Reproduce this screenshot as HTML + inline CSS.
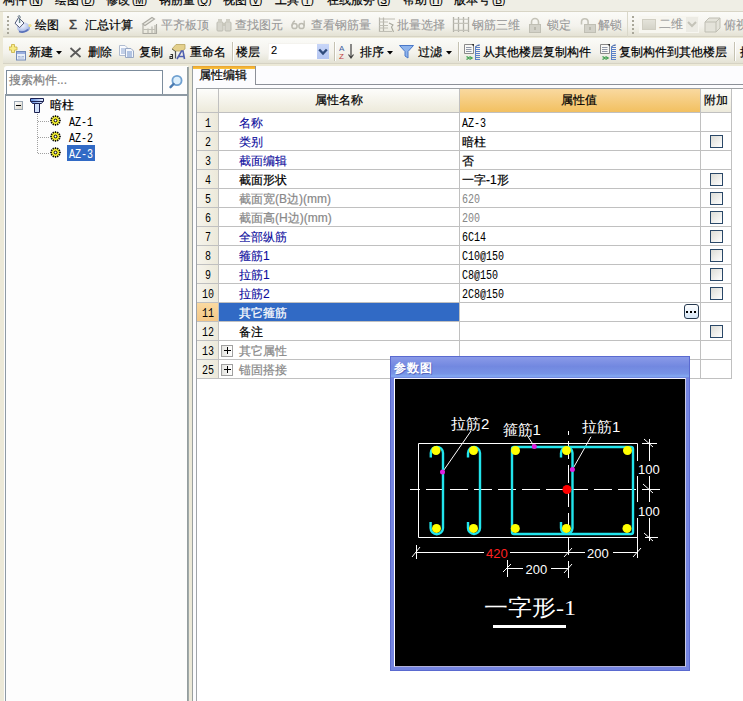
<!DOCTYPE html>
<html><head><meta charset="utf-8">
<style>
*{box-sizing:border-box}
html,body{margin:0;padding:0}
body{width:743px;height:701px;position:relative;overflow:hidden;background:#ECE9D8;font-family:"Liberation Sans",sans-serif;font-size:12px;color:#000}
.a{position:absolute}
.t{position:absolute;white-space:nowrap;line-height:12px;font-size:12px;-webkit-text-stroke-width:0.2px}
.mono{font-family:"Liberation Mono",monospace;font-size:12px;transform:scaleX(.834);transform-origin:0 0;-webkit-text-stroke-width:0.05px;margin-top:1px}
.g{color:#989898;-webkit-text-stroke-width:0.1px}
</style></head><body>

<!-- menu bar -->
<div class="a" style="left:0;top:0;width:743px;height:11px;background:#EFEEE5"></div>
<div class="a" style="left:0;top:11px;width:743px;height:1px;background:#D8D5C6"></div>
<div id="menu">
<span class="t" style="left:3px;top:-6px">构件<span style="margin-left:2px;font-size:10px;-webkit-text-stroke-width:0.1px">(<u>N</u>)</span></span>
<span class="t" style="left:55px;top:-6px">绘图<span style="margin-left:2px;font-size:10px;-webkit-text-stroke-width:0.1px">(<u>D</u>)</span></span>
<span class="t" style="left:106px;top:-6px">修改<span style="margin-left:2px;font-size:10px;-webkit-text-stroke-width:0.1px">(<u>M</u>)</span></span>
<span class="t" style="left:159px;top:-6px">钢筋量<span style="margin-left:2px;font-size:10px;-webkit-text-stroke-width:0.1px">(<u>Q</u>)</span></span>
<span class="t" style="left:223px;top:-6px">视图<span style="margin-left:2px;font-size:10px;-webkit-text-stroke-width:0.1px">(<u>V</u>)</span></span>
<span class="t" style="left:275px;top:-6px">工具<span style="margin-left:2px;font-size:10px;-webkit-text-stroke-width:0.1px">(<u>T</u>)</span></span>
<span class="t" style="left:327px;top:-6px">在线服务<span style="margin-left:2px;font-size:10px;-webkit-text-stroke-width:0.1px">(<u>S</u>)</span></span>
<span class="t" style="left:403px;top:-6px">帮助<span style="margin-left:2px;font-size:10px;-webkit-text-stroke-width:0.1px">(<u>H</u>)</span></span>
<span class="t" style="left:454px;top:-6px">版本号<span style="margin-left:2px;font-size:10px;-webkit-text-stroke-width:0.1px">(<u>B</u>)</span></span>
</div>

<!-- toolbar 1 -->
<div class="a" style="left:0;top:12px;width:743px;height:26px;background:#ECE9D8"></div>
<div class="a" style="left:3px;top:12px;width:740px;height:25px;background:linear-gradient(#FBFBF8,#F3F2EC 60%,#E4E2D4);border-bottom:1px solid #D6D3C4"></div>

<!-- toolbar 2 -->
<div class="a" style="left:3px;top:38px;width:740px;height:26px;background:linear-gradient(#FBFBF8,#F3F2EC 60%,#E4E2D4);border-bottom:1px solid #D6D3C4"></div>


<!-- toolbar1 items -->
<div class="a" style="left:7px;top:16px;width:2px;height:18px;background:repeating-linear-gradient(#A9A79A 0 2px,transparent 2px 4px)"></div>
<svg class="a" style="left:12px;top:14px" width="22" height="22" viewBox="0 0 22 22">
 <defs><radialGradient id="sw" cx="0.4" cy="0.3" r="0.8"><stop offset="0" stop-color="#F4F6FE"/><stop offset="0.6" stop-color="#B8C6EC"/><stop offset="1" stop-color="#5A74C0"/></radialGradient></defs>
 <ellipse cx="11.5" cy="13.5" rx="6.5" ry="5" fill="url(#sw)"/>
 <path d="M7 17.5 Q12 19.5 16 15.5" stroke="#5870B8" stroke-width="1.6" fill="none"/>
 <path d="M3 9.3 L6.6 3.6 L12 9 L7.6 13.6 Z" fill="#F6F8FE" stroke="#505878" stroke-width="1"/>
 <path d="M6.6 3.6 Q5.5 2 6.8 1.6 Q8.5 1.5 8.2 4" stroke="#607080" stroke-width="1" fill="none"/>
 <path d="M7.6 4.5 V9" stroke="#6A8888" stroke-width="1.4"/>
 <circle cx="18" cy="11.5" r="1.6" fill="#F0E080"/>
</svg>
<span class="t" style="left:35px;top:19px">绘图</span>
<span class="t" style="left:69px;top:19px;font-size:13px;color:#404040;-webkit-text-stroke-width:0.4px">&Sigma;</span>
<span class="t" style="left:85px;top:19px">汇总计算</span>
<svg class="a" style="left:141px;top:16px" width="17" height="18" viewBox="0 0 17 18">
 <path d="M1.5 8 L11 1.5 L13.5 3 L4 9.5 Z" fill="#ECEBE4" stroke="#ABAAA2" stroke-width="1.1"/>
 <path d="M2 9v8.5H15.5V8" stroke="#ABAAA2" stroke-width="1.1" fill="none"/>
 <path d="M7 12.5v5M11 10.5v7M14 9v8.5" stroke="#B4B3AA" stroke-width="1.1"/>
 <path d="M2 13.5h12" stroke="#C0BFB6" stroke-width="1"/>
</svg>
<span class="t g" style="left:161px;top:19px">平齐板顶</span>
<svg class="a" style="left:216px;top:18px" width="16" height="14" viewBox="0 0 16 14">
 <rect x="1" y="4" width="6" height="9" rx="1" fill="#D6D5CC" stroke="#BDBCB2"/>
 <rect x="9" y="4" width="6" height="9" rx="1" fill="#D6D5CC" stroke="#BDBCB2"/>
 <rect x="2" y="1" width="4" height="4" fill="#CFCEC4"/><rect x="10" y="1" width="4" height="4" fill="#CFCEC4"/>
 <rect x="6" y="5" width="4" height="3" fill="#C8C7BC"/>
</svg>
<span class="t g" style="left:235px;top:19px">查找图元</span>
<svg class="a" style="left:291px;top:20px" width="15" height="10" viewBox="0 0 15 10">
 <circle cx="3.5" cy="6" r="2.6" fill="none" stroke="#BDBCB2" stroke-width="1.5"/>
 <circle cx="10.5" cy="6" r="2.6" fill="none" stroke="#BDBCB2" stroke-width="1.5"/>
 <path d="M1 6 Q1.5 1.5 4 1 M13.2 6 V0.5" stroke="#BDBCB2" stroke-width="1.3" fill="none"/>
</svg>
<span class="t g" style="left:311px;top:19px">查看钢筋量</span>
<svg class="a" style="left:378px;top:16px" width="18" height="17" viewBox="0 0 18 17">
 <path d="M1.5 1.5v14.5M5.5 1.5v14.5" stroke="#B4B3AA" stroke-width="1.2"/>
 <path d="M1 3h16M1 6h9M1 9.5h9M1 12h9M1 15.5h13" stroke="#BFBEB4" stroke-width="1.1"/>
 <path d="M11 7 L15 9 L13.5 11 L15.5 16" stroke="#A8A79C" stroke-width="1.1" fill="none"/>
</svg>
<span class="t g" style="left:397px;top:19px">批量选择</span>
<svg class="a" style="left:452px;top:16px" width="18" height="17" viewBox="0 0 18 17">
 <path d="M1.5 1v15M6.5 1v15M11.5 1v15M16.5 1v15" stroke="#B2B1A8" stroke-width="1.3"/>
 <path d="M1.5 3.3h15M1.5 7.4h15M1.5 14.4h15" stroke="#C4C3BA" stroke-width="1.1"/>
</svg>
<span class="t g" style="left:472px;top:19px">钢筋三维</span>
<svg class="a" style="left:528px;top:17px" width="14" height="16" viewBox="0 0 14 16">
 <path d="M3.5 7.5V5a3.5 3.5 0 0 1 7 0v2.5" stroke="#C4C3B8" stroke-width="1.6" fill="none"/>
 <rect x="1.5" y="7.5" width="11" height="8" fill="#D2D1C8" stroke="#C0BFB4"/>
 <path d="M7 10v3" stroke="#B0AFA4" stroke-width="1.5"/>
</svg>
<span class="t g" style="left:547px;top:19px">锁定</span>
<svg class="a" style="left:580px;top:17px" width="16" height="16" viewBox="0 0 16 16">
 <path d="M1.5 7.5V5a3.3 3.3 0 0 1 6.6 0v2.5" stroke="#C4C3B8" stroke-width="1.6" fill="none"/>
 <rect x="4.5" y="7.5" width="11" height="8" fill="#D2D1C8" stroke="#C0BFB4"/>
 <path d="M10 10v3" stroke="#B0AFA4" stroke-width="1.5"/>
</svg>
<span class="t g" style="left:598px;top:19px">解锁</span>
<div class="a" style="left:627px;top:12px;width:1px;height:25px;background:#DAD8CA"></div>
<div class="a" style="left:632px;top:16px;width:2px;height:18px;background:repeating-linear-gradient(#A9A79A 0 2px,transparent 2px 4px)"></div>
<div class="a" style="left:639px;top:16px;width:60px;height:17px;background:#F7F6F0"></div>
<div class="a" style="left:642px;top:19px;width:14px;height:11px;background:linear-gradient(#E4E3DA,#D4D3C8);border:1px solid #D0CEC2"></div>
<span class="t g" style="left:659px;top:18px">二维</span>
<div class="a" style="left:686px;top:17px;width:12px;height:15px;background:#ECEBE4"></div>
<svg class="a" style="left:687px;top:21px" width="10" height="7" viewBox="0 0 10 7"><path d="M1 1 L5 5 L9 1" stroke="#C4C3B8" stroke-width="2" fill="none"/></svg>
<svg class="a" style="left:704px;top:17px" width="17" height="16" viewBox="0 0 17 16">
 <path d="M1 5 L5 1 H16 V11 L12 15 H1 Z" fill="#E4E3DA" stroke="#BFBEB3"/>
 <path d="M1 5 H12 V15 M12 5 L16 1" stroke="#BFBEB3" fill="none"/>
</svg>
<span class="t g" style="left:724px;top:19px">俯视</span>

<!-- toolbar2 items -->
<svg class="a" style="left:9px;top:44px" width="17" height="17" viewBox="0 0 17 17">
 <path d="M2.5 0.5h3v2.5h2.5v3H5.5v2.5h-3V6H0V3h2.5z" fill="#F8EC88" stroke="#C8B040" stroke-width=".8"/>
 <rect x="7.5" y="7.5" width="9" height="8.5" fill="#E8EEF8" stroke="#7088B8"/>
 <rect x="8" y="8" width="8" height="2" fill="#9AAEE0"/>
 <path d="M9 12.5h2.5M12.5 12.5H15M9 14h6" stroke="#A8B8D8"/>
</svg>
<span class="t" style="left:29px;top:46px">新建</span>
<svg class="a" style="left:56px;top:51px" width="6" height="4" viewBox="0 0 6 4"><path d="M0 0h6L3 3.5z" fill="#000"/></svg>
<svg class="a" style="left:69px;top:47px" width="13" height="11" viewBox="0 0 13 11"><path d="M1.5 1 L11.5 10 M11.5 1 L1.5 10" stroke="#5A5A5A" stroke-width="1.8"/></svg>
<span class="t" style="left:88px;top:46px">删除</span>
<svg class="a" style="left:118px;top:45px" width="17" height="13" viewBox="0 0 17 13">
 <path d="M1.5 0.5 H7 L9.5 3 V10.5 H1.5 Z" fill="#FAFBFE" stroke="#B0BCD0"/>
 <path d="M3 4h4.5M3 6h4.5M3 8h4.5" stroke="#8AA4D0"/>
 <path d="M7.5 3.5 H13 L15.5 6 V12.5 H7.5 Z" fill="#F4F7FC" stroke="#98A8C4"/>
 <path d="M9 7h5M9 9h5M9 11h5" stroke="#6E90C8"/>
</svg>
<span class="t" style="left:139px;top:46px">复制</span>
<svg class="a" style="left:166px;top:40px" width="24" height="22" viewBox="0 0 24 22">
 <path d="M6 9 L10 4.5 H19 V9 L16 11 H9 Z" fill="#E4D08C" stroke="#B8A460" stroke-width=".8"/>
 <path d="M6 9 L9 11" stroke="#707060" stroke-width="1"/>
 <path d="M4.5 14.5 h2 v4 h-2.5 v-2 h2.5" stroke="#303030" stroke-width="1.1" fill="none"/>
 <path d="M9.5 11v7.5" stroke="#505050" stroke-width="1.2"/>
 <path d="M11 19 L15.5 11 H17 L18.5 19 M13 16.5 H18" stroke="#5060B0" stroke-width="1.6" fill="none"/>
</svg>
<span class="t" style="left:190px;top:46px">重命名</span>
<div class="a" style="left:232px;top:42px;width:1px;height:19px;background:#C5C2B2"></div>
<div class="a" style="left:233px;top:42px;width:1px;height:19px;background:#FFF"></div>
<span class="t" style="left:236px;top:46px">楼层</span>
<div class="a" style="left:268px;top:43px;width:61px;height:17px;background:#FFF;border:1px solid #F4F3EE"></div>
<span class="t" style="left:271px;top:44px;font-size:11px;-webkit-text-stroke-width:0.1px">2</span>
<div class="a" style="left:317px;top:44px;width:12px;height:15px;background:linear-gradient(#C8D6F8,#B4C6F2)"></div>
<svg class="a" style="left:318px;top:48px" width="10" height="8" viewBox="0 0 10 8"><path d="M1.2 1.5 L5 5.5 L8.8 1.5" stroke="#304C7C" stroke-width="2.4" fill="none"/></svg>
<div class="a" style="left:334px;top:42px;width:1px;height:19px;background:#C5C2B2"></div>
<div class="a" style="left:335px;top:42px;width:1px;height:19px;background:#FFF"></div>
<svg class="a" style="left:339px;top:43px" width="19" height="17" viewBox="0 0 19 17">
 <text x="0" y="8" font-family="Liberation Sans" font-size="8" fill="#4060A0">A</text>
 <text x="0" y="16" font-family="Liberation Sans" font-size="8" fill="#C04040">Z</text>
 <path d="M12 1v13M9.5 11.5 L12 15 L14.5 11.5" stroke="#404040" stroke-width="1.2" fill="none"/>
</svg>
<span class="t" style="left:360px;top:46px">排序</span>
<svg class="a" style="left:387px;top:51px" width="6" height="4" viewBox="0 0 6 4"><path d="M0 0h6L3 3.5z" fill="#000"/></svg>
<svg class="a" style="left:399px;top:45px" width="15" height="14" viewBox="0 0 15 14">
 <path d="M0.5 0.5 H14.5 L9 6.5 V13 L6 11 V6.5 Z" fill="#8EB4EC" stroke="#4A78C8"/>
</svg>
<span class="t" style="left:418px;top:46px">过滤</span>
<svg class="a" style="left:446px;top:51px" width="6" height="4" viewBox="0 0 6 4"><path d="M0 0h6L3 3.5z" fill="#000"/></svg>
<div class="a" style="left:458px;top:42px;width:1px;height:19px;background:#C5C2B2"></div>
<div class="a" style="left:459px;top:42px;width:1px;height:19px;background:#FFF"></div>
<svg class="a" style="left:463px;top:43px" width="18" height="18" viewBox="0 0 18 18">
 <path d="M1.5 1.5 H9 L10.5 3 V10.5 H1.5 Z" fill="#F8F8F6" stroke="#8A8A88"/>
 <path d="M8.5 1 L11 1 L11 3.5 Z" fill="#303030"/>
 <path d="M3 4.5h5.5M3 6.5h5.5M3 8.5h5.5" stroke="#9098A8"/>
 <path d="M3.5 13.5 L6 15 L3.5 16.5 M6.5 13.5 L9 15 L6.5 16.5" stroke="#40A050" stroke-width="1.4" fill="none"/>
 <path d="M12.5 4v13M12 4.5h5M12 6.5h5M12 8.5h5M12 10.5h5M12 12.5h5M12 14.5h5M12 16.5h5" stroke="#5A80C8" stroke-width="1"/>
 <path d="M12 4 L15 2 H17" stroke="#5A80C8" stroke-width="1"/>
</svg>
<span class="t" style="left:483px;top:46px">从其他楼层复制构件</span>
<svg class="a" style="left:599px;top:43px" width="18" height="18" viewBox="0 0 18 18">
 <path d="M1.5 1.5 H9 L10.5 3 V10.5 H1.5 Z" fill="#F8F8F6" stroke="#8A8A88"/>
 <path d="M8.5 1 L11 1 L11 3.5 Z" fill="#303030"/>
 <path d="M3 4.5h5.5M3 6.5h5.5M3 8.5h5.5" stroke="#9098A8"/>
 <path d="M3.5 13.5 L6 15 L3.5 16.5 M6.5 13.5 L9 15 L6.5 16.5" stroke="#40A050" stroke-width="1.4" fill="none"/>
 <path d="M12.5 4v13M12 4.5h5M12 6.5h5M12 8.5h5M12 10.5h5M12 12.5h5M12 14.5h5M12 16.5h5" stroke="#5A80C8" stroke-width="1"/>
 <path d="M12 4 L15 2 H17" stroke="#5A80C8" stroke-width="1"/>
</svg>
<span class="t" style="left:619px;top:46px">复制构件到其他楼层</span>
<div class="a" style="left:734px;top:42px;width:1px;height:19px;background:#C5C2B2"></div>
<div class="a" style="left:735px;top:42px;width:1px;height:19px;background:#FFF"></div>
<span class="t" style="left:740px;top:46px">批</span>

<!-- left panel -->
<div class="a" style="left:4px;top:66px;width:184px;height:635px;background:#FDFDFD;border-top-left-radius:3px"></div>
<div class="a" style="left:187px;top:67px;width:2px;height:634px;background:linear-gradient(90deg,#8E9898,#A8B0B0)"></div>
<div class="a" style="left:6px;top:70px;width:157px;height:24px;background:#FFF;border:1px solid #7C8C9C;border-bottom:none"></div>
<span class="t" style="left:9px;top:74px;color:#808080;-webkit-text-stroke-width:0.2px">搜索构件...</span>
<svg class="a" style="left:168px;top:74px" width="16" height="16" viewBox="0 0 16 16">
 <circle cx="9" cy="6.5" r="4.6" fill="#DDEFFC" stroke="#6FA0D0" stroke-width="1.8"/>
 <path d="M5.6 10 L2.5 13.2" stroke="#4A7AB0" stroke-width="2.4" stroke-linecap="round"/>
</svg>
<div class="a" style="left:5px;top:94px;width:183px;height:2px;background:#8E9AA4"></div>
<div class="a" style="left:5px;top:94px;width:1px;height:607px;background:#8E9AA4"></div>
<!-- tree -->
<div class="a" style="left:14px;top:101px;width:9px;height:9px;border:1px solid #9CA8B4;background:linear-gradient(135deg,#FFF,#D8D4C8)"></div>
<div class="a" style="left:16px;top:105px;width:5px;height:1px;background:#000"></div>
<svg class="a" style="left:30px;top:98px" width="15" height="16" viewBox="0 0 15 16">
 <defs><linearGradient id="tg" x1="0" x2="1"><stop offset="0" stop-color="#5A88E0"/><stop offset="1" stop-color="#E8F0FF"/></linearGradient></defs>
 <path d="M1 3.5 H13 L11.5 5.5 H2.5Z" fill="url(#tg)" stroke="#1A2050"/>
 <path d="M4.5 5.5 H9.5 V14.5 H4.5Z" fill="#D0DEF8" stroke="#1A2050"/>
 <path d="M0.5 0.5 H13.5 V3.5 H0.5Z" fill="url(#tg)" stroke="#1A2050"/>
</svg>
<span class="t" style="left:50px;top:99px">暗柱</span>
<div class="a" style="left:37px;top:114px;width:1px;height:40px;background:repeating-linear-gradient(#A0A0A0 0 1px,transparent 1px 2px)"></div>
<div class="a" style="left:38px;top:121px;width:11px;height:1px;background:repeating-linear-gradient(90deg,#A0A0A0 0 1px,transparent 1px 2px)"></div>
<div class="a" style="left:38px;top:137px;width:11px;height:1px;background:repeating-linear-gradient(90deg,#A0A0A0 0 1px,transparent 1px 2px)"></div>
<div class="a" style="left:38px;top:153px;width:11px;height:1px;background:repeating-linear-gradient(90deg,#A0A0A0 0 1px,transparent 1px 2px)"></div>
<svg class="a" style="left:50px;top:115px" width="11" height="11" viewBox="0 0 11 11"><use href="#gear"/></svg>
<svg class="a" style="left:50px;top:131px" width="11" height="11" viewBox="0 0 11 11"><use href="#gear"/></svg>
<svg class="a" style="left:50px;top:147px" width="11" height="11" viewBox="0 0 11 11"><use href="#gear"/></svg>
<svg width="0" height="0" style="position:absolute"><defs>
<g id="gear">
 <circle cx="5.5" cy="5.5" r="4.4" fill="#F0EC30"/>
 <path d="M9.10 5.50L10.80 5.50M8.62 7.30L10.09 8.15M7.30 8.62L8.15 10.09M5.50 9.10L5.50 10.80M3.70 8.62L2.85 10.09M2.38 7.30L0.91 8.15M1.90 5.50L0.20 5.50M2.38 3.70L0.91 2.85M3.70 2.38L2.85 0.91M5.50 1.90L5.50 0.20M7.30 2.38L8.15 0.91M8.62 3.70L10.09 2.85" stroke="#000" stroke-width="1.3"/>
 <circle cx="5.5" cy="5.5" r="1.4" fill="#FFF" stroke="#000" stroke-width="1"/>
</g></defs></svg>
<span class="t mono" style="left:69px;top:116px;">AZ-1</span>
<span class="t mono" style="left:69px;top:132px;">AZ-2</span>
<div class="a" style="left:67px;top:145px;width:28px;height:16px;background:#316AC5"></div>
<span class="t mono" style="left:69px;top:148px;color:#FFF">AZ-3</span>

<!-- right panel -->
<div class="a" style="left:192px;top:66px;width:551px;height:635px;background:#FCFCFE;border-left:1px solid #9AA0A0"></div>
<!-- tab -->
<div class="a" style="left:193px;top:66px;width:63px;height:19px;background:#FCFCFE;border-right:1px solid #8C9098"></div>
<div class="a" style="left:193px;top:66px;width:62px;height:3px;background:linear-gradient(#E6A030,#FFC83C)"></div>
<span class="t" style="left:199px;top:69px">属性编辑</span>
<div class="a" style="left:256px;top:84px;width:487px;height:1px;background:#8C9098"></div>
<!-- table -->
<div class="a" style="left:196px;top:88px;width:547px;height:613px;background:#FFF;border-left:1px solid #A0A4A8;border-top:1px solid #9CA0A4"></div>
<div class="a" style="left:197px;top:89px;width:21px;height:23px;background:linear-gradient(#FDFDFB,#EDEADB)"></div>
<div class="a" style="left:219px;top:89px;width:240px;height:23px;background:linear-gradient(#FDFDFB,#EDEADB)"></div>
<div class="a" style="left:460px;top:89px;width:240px;height:23px;background:linear-gradient(#F9D9A0,#F2C060)"></div>
<div class="a" style="left:701px;top:89px;width:30px;height:23px;background:linear-gradient(#FDFDFB,#EDEADB)"></div>
<span class="t" style="left:315px;top:94px">属性名称</span>
<span class="t" style="left:561px;top:94px">属性值</span>
<span class="t" style="left:704px;top:94px">附加</span>
<div class="a" style="left:197px;top:113px;width:21px;height:18px;background:linear-gradient(90deg,#F6F4EC,#ECE9DA)"></div>
<span class="t mono" style="left:205px;top:117px;-webkit-text-stroke-width:0">1</span>
<span class="t" style="left:239px;top:117px;color:#0A0A9C;-webkit-text-stroke-width:0.1px">名称</span>
<span class="t mono" style="left:462px;top:117px;color:#000">AZ-3</span>
<div class="a" style="left:197px;top:132px;width:21px;height:18px;background:linear-gradient(90deg,#F6F4EC,#ECE9DA)"></div>
<span class="t mono" style="left:205px;top:136px;-webkit-text-stroke-width:0">2</span>
<span class="t" style="left:239px;top:136px;color:#0A0A9C;-webkit-text-stroke-width:0.1px">类别</span>
<span class="t" style="left:462px;top:136px;color:#000">暗柱</span>
<div class="a" style="left:710px;top:135px;width:13px;height:13px;border:1px solid #2A4868;background:linear-gradient(135deg,#DCDCD6,#FFFFFF)"></div>
<div class="a" style="left:197px;top:151px;width:21px;height:18px;background:linear-gradient(90deg,#F6F4EC,#ECE9DA)"></div>
<span class="t mono" style="left:205px;top:155px;-webkit-text-stroke-width:0">3</span>
<span class="t" style="left:239px;top:155px;color:#0A0A9C;-webkit-text-stroke-width:0.1px">截面编辑</span>
<span class="t" style="left:462px;top:155px;color:#000">否</span>
<div class="a" style="left:197px;top:170px;width:21px;height:18px;background:linear-gradient(90deg,#F6F4EC,#ECE9DA)"></div>
<span class="t mono" style="left:205px;top:174px;-webkit-text-stroke-width:0">4</span>
<span class="t" style="left:239px;top:174px;color:#000">截面形状</span>
<span class="t" style="left:462px;top:174px;color:#000">一字-1形</span>
<div class="a" style="left:710px;top:173px;width:13px;height:13px;border:1px solid #2A4868;background:linear-gradient(135deg,#DCDCD6,#FFFFFF)"></div>
<div class="a" style="left:197px;top:189px;width:21px;height:18px;background:linear-gradient(90deg,#F6F4EC,#ECE9DA)"></div>
<span class="t mono" style="left:205px;top:193px;-webkit-text-stroke-width:0">5</span>
<span class="t" style="left:239px;top:193px;color:#888">截面宽(B边)(mm)</span>
<span class="t mono" style="left:462px;top:193px;color:#888">620</span>
<div class="a" style="left:710px;top:192px;width:13px;height:13px;border:1px solid #2A4868;background:linear-gradient(135deg,#DCDCD6,#FFFFFF)"></div>
<div class="a" style="left:197px;top:208px;width:21px;height:18px;background:linear-gradient(90deg,#F6F4EC,#ECE9DA)"></div>
<span class="t mono" style="left:205px;top:212px;-webkit-text-stroke-width:0">6</span>
<span class="t" style="left:239px;top:212px;color:#888">截面高(H边)(mm)</span>
<span class="t mono" style="left:462px;top:212px;color:#888">200</span>
<div class="a" style="left:710px;top:211px;width:13px;height:13px;border:1px solid #2A4868;background:linear-gradient(135deg,#DCDCD6,#FFFFFF)"></div>
<div class="a" style="left:197px;top:227px;width:21px;height:18px;background:linear-gradient(90deg,#F6F4EC,#ECE9DA)"></div>
<span class="t mono" style="left:205px;top:231px;-webkit-text-stroke-width:0">7</span>
<span class="t" style="left:239px;top:231px;color:#0A0A9C;-webkit-text-stroke-width:0.1px">全部纵筋</span>
<span class="t mono" style="left:462px;top:231px;color:#000">6C14</span>
<div class="a" style="left:710px;top:230px;width:13px;height:13px;border:1px solid #2A4868;background:linear-gradient(135deg,#DCDCD6,#FFFFFF)"></div>
<div class="a" style="left:197px;top:246px;width:21px;height:18px;background:linear-gradient(90deg,#F6F4EC,#ECE9DA)"></div>
<span class="t mono" style="left:205px;top:250px;-webkit-text-stroke-width:0">8</span>
<span class="t" style="left:239px;top:250px;color:#0A0A9C;-webkit-text-stroke-width:0.1px">箍筋1</span>
<span class="t mono" style="left:462px;top:250px;color:#000">C10@150</span>
<div class="a" style="left:710px;top:249px;width:13px;height:13px;border:1px solid #2A4868;background:linear-gradient(135deg,#DCDCD6,#FFFFFF)"></div>
<div class="a" style="left:197px;top:265px;width:21px;height:18px;background:linear-gradient(90deg,#F6F4EC,#ECE9DA)"></div>
<span class="t mono" style="left:205px;top:269px;-webkit-text-stroke-width:0">9</span>
<span class="t" style="left:239px;top:269px;color:#0A0A9C;-webkit-text-stroke-width:0.1px">拉筋1</span>
<span class="t mono" style="left:462px;top:269px;color:#000">C8@150</span>
<div class="a" style="left:710px;top:268px;width:13px;height:13px;border:1px solid #2A4868;background:linear-gradient(135deg,#DCDCD6,#FFFFFF)"></div>
<div class="a" style="left:197px;top:284px;width:21px;height:18px;background:linear-gradient(90deg,#F6F4EC,#ECE9DA)"></div>
<span class="t mono" style="left:201.5px;top:288px;-webkit-text-stroke-width:0">10</span>
<span class="t" style="left:239px;top:288px;color:#0A0A9C;-webkit-text-stroke-width:0.1px">拉筋2</span>
<span class="t mono" style="left:462px;top:288px;color:#000">2C8@150</span>
<div class="a" style="left:710px;top:287px;width:13px;height:13px;border:1px solid #2A4868;background:linear-gradient(135deg,#DCDCD6,#FFFFFF)"></div>
<div class="a" style="left:197px;top:303px;width:21px;height:18px;background:linear-gradient(#FAD9A0,#F4C888)"></div>
<div class="a" style="left:219px;top:303px;width:240px;height:18px;background:#316AC5"></div>
<span class="t mono" style="left:201.5px;top:307px;-webkit-text-stroke-width:0">11</span>
<span class="t" style="left:239px;top:307px;color:#FFF">其它箍筋</span>
<div class="a" style="left:197px;top:322px;width:21px;height:18px;background:linear-gradient(90deg,#F6F4EC,#ECE9DA)"></div>
<span class="t mono" style="left:201.5px;top:326px;-webkit-text-stroke-width:0">12</span>
<span class="t" style="left:239px;top:326px;color:#000">备注</span>
<div class="a" style="left:710px;top:325px;width:13px;height:13px;border:1px solid #2A4868;background:linear-gradient(135deg,#DCDCD6,#FFFFFF)"></div>
<div class="a" style="left:197px;top:341px;width:21px;height:18px;background:linear-gradient(90deg,#F6F4EC,#ECE9DA)"></div>
<span class="t mono" style="left:201.5px;top:345px;-webkit-text-stroke-width:0">13</span>
<div class="a" style="left:221px;top:345px;width:12px;height:12px;border:1px solid #A0A0A0;background:linear-gradient(90deg,#E4E4E0,#FFF)"></div>
<div class="a" style="left:224px;top:350px;width:7px;height:1px;background:#000"></div>
<div class="a" style="left:227px;top:347px;width:1px;height:7px;background:#000"></div>
<span class="t" style="left:239px;top:345px;color:#888">其它属性</span>
<div class="a" style="left:197px;top:360px;width:21px;height:18px;background:linear-gradient(90deg,#F6F4EC,#ECE9DA)"></div>
<span class="t mono" style="left:201.5px;top:364px;-webkit-text-stroke-width:0">25</span>
<div class="a" style="left:221px;top:364px;width:12px;height:12px;border:1px solid #A0A0A0;background:linear-gradient(90deg,#E4E4E0,#FFF)"></div>
<div class="a" style="left:224px;top:369px;width:7px;height:1px;background:#000"></div>
<div class="a" style="left:227px;top:366px;width:1px;height:7px;background:#000"></div>
<span class="t" style="left:239px;top:364px;color:#888">锚固搭接</span>
<div class="a" style="left:197px;top:112px;width:535px;height:1px;background:#C0C0C0"></div>
<div class="a" style="left:197px;top:131px;width:535px;height:1px;background:#C0C0C0"></div>
<div class="a" style="left:197px;top:150px;width:535px;height:1px;background:#C0C0C0"></div>
<div class="a" style="left:197px;top:169px;width:535px;height:1px;background:#C0C0C0"></div>
<div class="a" style="left:197px;top:188px;width:535px;height:1px;background:#C0C0C0"></div>
<div class="a" style="left:197px;top:207px;width:535px;height:1px;background:#C0C0C0"></div>
<div class="a" style="left:197px;top:226px;width:535px;height:1px;background:#C0C0C0"></div>
<div class="a" style="left:197px;top:245px;width:535px;height:1px;background:#C0C0C0"></div>
<div class="a" style="left:197px;top:264px;width:535px;height:1px;background:#C0C0C0"></div>
<div class="a" style="left:197px;top:283px;width:535px;height:1px;background:#C0C0C0"></div>
<div class="a" style="left:197px;top:302px;width:535px;height:1px;background:#C0C0C0"></div>
<div class="a" style="left:197px;top:321px;width:535px;height:1px;background:#C0C0C0"></div>
<div class="a" style="left:197px;top:340px;width:535px;height:1px;background:#C0C0C0"></div>
<div class="a" style="left:197px;top:359px;width:535px;height:1px;background:#C0C0C0"></div>
<div class="a" style="left:197px;top:378px;width:535px;height:1px;background:#C0C0C0"></div>
<div class="a" style="left:218px;top:89px;width:1px;height:289px;background:#C0C0C0"></div>
<div class="a" style="left:459px;top:89px;width:1px;height:289px;background:#C0C0C0"></div>
<div class="a" style="left:700px;top:89px;width:1px;height:289px;background:#C0C0C0"></div>
<div class="a" style="left:731px;top:89px;width:1px;height:289px;background:#C0C0C0"></div>
<div class="a" style="left:684px;top:304px;width:15px;height:15px;border:1px solid #24384E;border-radius:3px;background:linear-gradient(#FFFFFF,#D6E6F6)"></div>
<div class="a" style="left:686px;top:311px;width:2px;height:2px;background:#000;box-shadow:4px 0 #000,8px 0 #000"></div>

<!-- dialog -->
<div class="a" style="left:390px;top:356px;width:300px;height:315px;background:#7484E0;border:1px solid #5A6AD0"></div>
<div class="a" style="left:391px;top:357px;width:298px;height:21px;background:linear-gradient(#8A9AE8,#7288E0 45%,#7894E6 80%,#84AAF2 92%,#6A7CDA)"></div>
<span class="t" style="left:394px;top:362px;color:#FFF;font-weight:bold;-webkit-text-stroke-width:0;letter-spacing:1px;text-shadow:1px 1px 0 #5A6AC0">参数图</span>
<div class="a" style="left:394px;top:378px;width:292px;height:289px;background:#000;border:1px solid;border-color:#F4F4FF #C8C8E0 #B0B0D8 #FFFFFF"></div>
<svg class="a" style="left:395px;top:379px" width="290" height="287" viewBox="395 379 290 287">
 <g fill="none" stroke="#FFFFFF" stroke-width="1">
  <path d="M418.5 443.5 H637.5 V558 M418.5 443.5 V537.5 H637.5"/>
  <path d="M410 489.5 H660" stroke-dasharray="18 6" stroke-dashoffset="8"/>
  <path d="M568.5 431 V578" stroke-dasharray="18 6" stroke-dashoffset="14"/>
  <path d="M416 552.5 H637.5"/>
  <path d="M416.5 545 V559 M412 557 L420 547"/>
  <path d="M564 557 L572 548 M633 557 L641 548"/>
  <path d="M507 568.5 H568.5 M507.5 560 V577 M503 572 L511 564 M564 573 L572 564"/>
  <path d="M649.5 439 V541 M642 443.5 H657 M645 537.5 H658 M644 439 L653 447 M643 484 L653 493 M644 533 L653 541"/>
  <path d="M442.5 472 L471 431 M534.3 446.5 L527 435 M572.4 469.6 L591 436.7"/>
 </g>
 <g fill="#000">
  <rect x="636" y="461" width="26" height="15"/>
  <rect x="636" y="502" width="26" height="16"/>
  <rect x="484" y="546" width="26" height="13"/>
  <rect x="585" y="546" width="28" height="13"/>
  <rect x="523" y="562" width="28" height="13"/>
 </g>
 <g fill="none" stroke="#22E4EC" stroke-width="2.4" stroke-linejoin="round">
  <rect x="512" y="447" width="121" height="87" rx="2"/>
  <path d="M430.8 457.5 V453 A6.1 6.1 0 0 1 443 453 V528 A6.2 6.2 0 0 1 430.6 528 V522"/>
  <path d="M468 457.5 V453 A6 6 0 0 1 480 453 V528 A6 6 0 0 1 468 528 V522"/>
  <path d="M561 457.5 V453 A5.75 5.75 0 0 1 572.5 453 V528 A5.75 5.75 0 0 1 561 528 V522"/>
 </g>
 <g fill="#FFFF00">
  <circle cx="436" cy="450.5" r="4.5"/><circle cx="473.5" cy="450.5" r="4.5"/><circle cx="515.5" cy="450.5" r="4.5"/><circle cx="566.5" cy="450.5" r="4.5"/><circle cx="627.5" cy="450.5" r="4.5"/>
  <circle cx="436.5" cy="528.4" r="4.5"/><circle cx="473.5" cy="528.4" r="4.5"/><circle cx="515.3" cy="528.4" r="4.5"/><circle cx="566.4" cy="528.4" r="4.5"/><circle cx="627" cy="528.4" r="4.5"/>
 </g>
 <circle cx="567" cy="489.5" r="4.5" fill="#FF0000"/>
 <g fill="#E020E0"><circle cx="442.5" cy="472" r="2.5"/><circle cx="534.3" cy="446.5" r="2.5"/><circle cx="572.4" cy="469.6" r="2.5"/></g>
 <g fill="#FFFFFF" font-family="Liberation Sans" font-size="13">
  <text x="638" y="474">100</text>
  <text x="638" y="515.5">100</text>
  <text x="587" y="557.5">200</text>
  <text x="525.5" y="573.5">200</text>
  <text x="486" y="557.5" fill="#FF2020">420</text>
 </g>
 <g fill="#FFFFFF" font-family="Liberation Sans" font-size="15">
  <text x="451" y="428.5">拉筋2</text>
  <text x="502.5" y="434.5">箍筋1</text>
  <text x="582" y="431.5">拉筋1</text>
 </g>
 <text x="484" y="614.5" fill="#FFFFFF" font-family="Liberation Serif" font-size="22" textLength="92" lengthAdjust="spacingAndGlyphs">一字形-1</text>
 <rect x="493" y="625" width="73" height="3" fill="#FFFFFF"/>
</svg>
</body></html>
